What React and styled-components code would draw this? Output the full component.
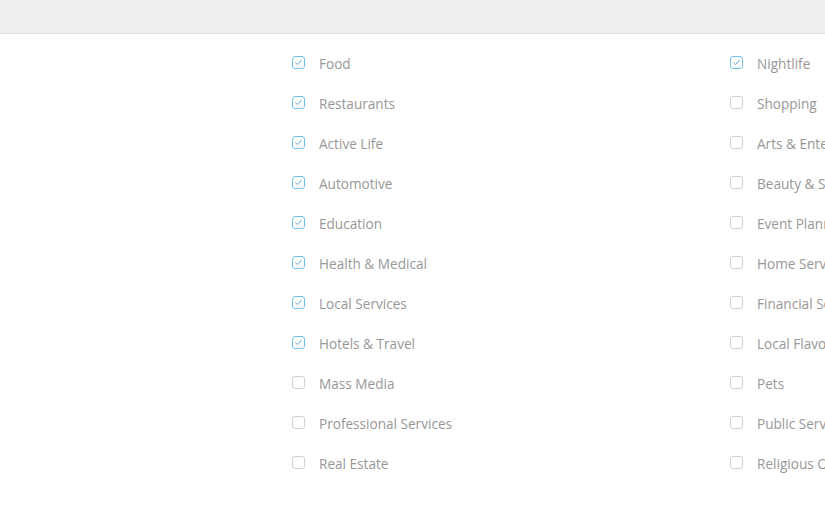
import React from "react";
import styled, { createGlobalStyle } from "styled-components";

const Global = createGlobalStyle`
  html, body { margin: 0; padding: 0; background: #fff; overflow: hidden; }
  body { font-family: "Open Sans", "Liberation Sans", sans-serif; }
`;

const Page = styled.div`
  width: 825px;
  height: 510px;
  overflow: hidden;
`;

const TopBar = styled.div`
  height: 33px;
  background: #efefef;
  border-bottom: 1px solid #dcdcdc;
`;

const Content = styled.div`
  display: grid;
  grid-template-columns: 438px 438px;
  padding: 9px 0 0 292px;
  white-space: nowrap;
`;

const Column = styled.div`
  display: flex;
  flex-direction: column;
`;

const Row = styled.label`
  display: flex;
  align-items: center;
  gap: 14px;
  height: 40px;
  font-size: 13.6px;
  color: #979797;
`;

const Box = styled.span`
  flex: none;
  box-sizing: border-box;
  width: 13px;
  height: 13px;
  margin-top: -2px;
  border-radius: 3px;
  border: 1px solid ${(p) => (p.$checked ? "#72c2ee" : "#d0d0d0")};
  display: flex;
  align-items: center;
  justify-content: center;
  background: #fff;
`;

const Check = () => (
  <svg width="9" height="9" viewBox="0 0 9 9">
    <path d="M1.5 4.6 L3.6 6.6 L7.6 2" fill="none" stroke="#5aa8dc" strokeWidth="1" />
  </svg>
);

const left = [
  ["Food", true],
  ["Restaurants", true],
  ["Active Life", true],
  ["Automotive", true],
  ["Education", true],
  ["Health & Medical", true],
  ["Local Services", true],
  ["Hotels & Travel", true],
  ["Mass Media", false],
  ["Professional Services", false],
  ["Real Estate", false],
];

const right = [
  ["Nightlife", true],
  ["Shopping", false],
  ["Arts & Entertainment", false],
  ["Beauty & Spas", false],
  ["Event Planning & Services", false],
  ["Home Services", false],
  ["Financial Services", false],
  ["Local Flavor", false],
  ["Pets", false],
  ["Public Services & Government", false],
  ["Religious Organizations", false],
];

const Item = ({ label, checked }) => (
  <Row>
    <Box $checked={checked}>{checked && <Check />}</Box>
    {label}
  </Row>
);

export default function App() {
  return (
    <Page>
      <Global />
      <TopBar />
      <Content>
        <Column>
          {left.map(([l, c]) => (
            <Item key={l} label={l} checked={c} />
          ))}
        </Column>
        <Column>
          {right.map(([l, c]) => (
            <Item key={l} label={l} checked={c} />
          ))}
        </Column>
      </Content>
    </Page>
  );
}
